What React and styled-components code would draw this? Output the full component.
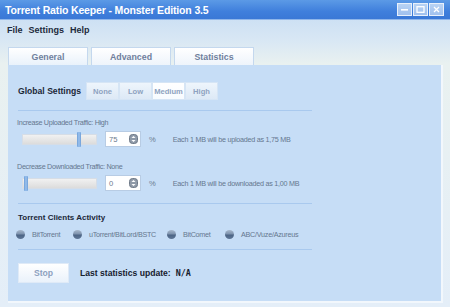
import React from "react";
import styled, { createGlobalStyle } from "styled-components";

const Global = createGlobalStyle`
  html, body { margin: 0; padding: 0; }
  body { font-family: "Liberation Sans", Arial, sans-serif; background: #fff; }
`;

const Window = styled.div`
  width: 450px;
  height: 307px;
  display: flex;
  flex-direction: column;
  background: linear-gradient(#c3daf3 0px, #d8e7f4 40px, #e9f1f0 64px, #e4eef8 100%);
  overflow: hidden;
`;

const TitleBar = styled.div`
  height: 19px;
  flex: none;
  display: flex;
  align-items: center;
  justify-content: space-between;
  padding: 0 6px 0 5px;
  background: linear-gradient(#5c9ae6, #3f7fdc 60%, #3a78d6);
  border-bottom: 1px solid #8fb6ea;
`;

const Title = styled.span`
  color: #fff;
  font-weight: bold;
  font-size: 10.5px;
  letter-spacing: -0.15px;
`;

const WinButtons = styled.div`
  display: flex;
  gap: 1px;
`;

const WinButton = styled.div`
  width: 15px;
  height: 13px;
  box-sizing: border-box;
  border: 1px solid #e8f0fb;
  background: linear-gradient(#b9d3f4, #9fc0ee);
  display: flex;
  align-items: center;
  justify-content: center;
`;

const MenuBar = styled.div`
  height: 17px;
  flex: none;
  display: flex;
  align-items: center;
  gap: 6px;
  padding: 0 7px;
  margin-top: 1px;
`;

const MenuItem = styled.span`
  font-size: 9px;
  font-weight: bold;
  color: #1d2a3c;
`;

const TabRow = styled.div`
  display: flex;
  gap: 3px;
  padding-left: 8px;
  margin-top: 9px;
  height: 18px;
  flex: none;
`;

const Tab = styled.div`
  width: 80px;
  box-sizing: border-box;
  display: flex;
  align-items: center;
  justify-content: center;
  font-size: 8.8px;
  font-weight: bold;
  color: #6f7f9c;
  border: 1px solid #c4d8ee;
  border-bottom: none;
  background: ${(p) =>
    p.$active
      ? "linear-gradient(#ffffff, #e9f2fb)"
      : "linear-gradient(#ffffff, #eef4fb)"};
`;

const Panel = styled.div`
  margin: 0 7px 0 8px;
  height: 238px;
  flex: none;
  box-sizing: border-box;
  background: #c6ddf6;
  border-right: 2px solid #f2f7fc;
  border-bottom: 2px solid #f2f7fc;
  padding: 17px 0 0 10px;
  display: flex;
  flex-direction: column;
`;

const Row = styled.div`
  display: flex;
  align-items: center;
`;

const Heading = styled.span`
  font-size: ${(p) => p.$size || 8.6}px;
  font-weight: bold;
  color: #1b2738;
  margin-top: ${(p) => p.$top || 0}px;
`;

const LevelGroup = styled.div`
  display: flex;
  margin-left: 5px;
`;

const LevelButton = styled.div`
  width: 33px;
  height: 18px;
  box-sizing: border-box;
  display: flex;
  align-items: center;
  justify-content: center;
  font-size: 7.6px;
  font-weight: bold;
  color: #8ea2c0;
  border: 1px solid #d6e5f5;
  background: ${(p) =>
    p.$active ? "linear-gradient(#ffffff, #f7fbff)" : "linear-gradient(#eef5fc, #dde9f6)"};
`;

const Separator = styled.div`
  width: 294px;
  height: 1px;
  background: #a9c9ee;
  margin-top: ${(p) => p.$top}px;
`;

const Label = styled.div`
  font-size: 7.2px;
  letter-spacing: -0.3px;
  color: #65778f;
  margin-top: ${(p) => p.$top}px;
  margin-left: -1px;
`;

const SliderRow = styled(Row)`
  margin-top: ${(p) => p.$top}px;
  height: 16px;
`;

const Track = styled.div`
  position: relative;
  width: 75px;
  height: 11px;
  margin-left: 4px;
  box-sizing: border-box;
  border: 1px solid #d6dde6;
  background: linear-gradient(#f1f1f1, #dcdcdc);
`;

const Thumb = styled.div`
  position: absolute;
  top: -3px;
  width: 4px;
  height: 15px;
  border-radius: 1px;
  background: linear-gradient(90deg, #6e9fd8, #9cc2ee, #6e9fd8);
`;

const Spin = styled.div`
  width: 36px;
  height: 16px;
  box-sizing: border-box;
  margin-left: 8px;
  background: #fff;
  border: 1px solid #b8cce4;
  display: flex;
  align-items: center;
  justify-content: space-between;
  padding: 0 2px 0 3px;
  font-size: 7.6px;
  color: #6b7a8e;
`;

const Percent = styled.span`
  font-size: 7.6px;
  color: #6b7a8e;
  margin-left: 8px;
`;

const Note = styled.span`
  font-size: 7.2px;
  letter-spacing: -0.25px;
  color: #65778f;
  margin-left: 17px;
`;

const Clients = styled(Row)`
  margin-top: 8px;
`;

const Client = styled.div`
  display: flex;
  align-items: center;
  width: ${(p) => p.$w}px;
  font-size: 7.2px;
  letter-spacing: -0.25px;
  color: #65778f;
  gap: 7px;
`;

const Dot = styled.span`
  width: 9px;
  height: 9px;
  border-radius: 50%;
  margin-left: -2px;
  background: linear-gradient(#a8b8cc 0%, #7d92ad 45%, #4c6484 55%, #5f7797 100%);
  flex: none;
`;

const Bottom = styled(Row)`
  margin-top: 13px;
`;

const StopButton = styled.div`
  width: 51px;
  height: 20px;
  box-sizing: border-box;
  display: flex;
  align-items: center;
  justify-content: center;
  font-size: 8.6px;
  font-weight: bold;
  color: #8da1bf;
  border: 1px solid #dfeaf7;
  background: linear-gradient(#ffffff, #eaf2fb);
`;

const Status = styled.span`
  font-size: 8.6px;
  font-weight: bold;
  color: #16202e;
  margin-left: 11px;
`;

const Mono = styled.span`
  font-family: "DejaVu Sans Mono", monospace;
  font-size: 8.4px;
  margin-left: 5px;
`;

const SpinIcon = () => (
  <svg width="9" height="10" viewBox="0 0 9 10">
    <rect x="0.5" y="0.5" width="8" height="9" rx="3" fill="#8f9aa8" stroke="#6f7a88" />
    <path d="M2.5 4 L4.5 2 L6.5 4 Z" fill="#fff" />
    <path d="M2.5 6 L4.5 8 L6.5 6 Z" fill="#fff" />
  </svg>
);

const Slider = ({ pos, value, note }) => (
  <>
    <Track>
      <Thumb style={{ left: pos }} />
    </Track>
    <Spin>
      {value}
      <SpinIcon />
    </Spin>
    <Percent>%</Percent>
    <Note>{note}</Note>
  </>
);

export default function App() {
  return (
    <>
      <Global />
      <Window>
        <TitleBar>
          <Title>Torrent Ratio Keeper - Monster Edition 3.5</Title>
          <WinButtons>
            <WinButton>
              <svg width="9" height="7" viewBox="0 0 9 7">
                <rect x="1" y="3" width="7" height="1.6" fill="#fff" />
              </svg>
            </WinButton>
            <WinButton>
              <svg width="9" height="7" viewBox="0 0 9 7">
                <rect x="1" y="0.7" width="7" height="5.6" fill="none" stroke="#fff" strokeWidth="1.3" />
              </svg>
            </WinButton>
            <WinButton>
              <svg width="9" height="7" viewBox="0 0 9 7">
                <path d="M2 1 L7 6 M7 1 L2 6" stroke="#fff" strokeWidth="1.3" />
              </svg>
            </WinButton>
          </WinButtons>
        </TitleBar>
        <MenuBar>
          <MenuItem>File</MenuItem>
          <MenuItem>Settings</MenuItem>
          <MenuItem>Help</MenuItem>
        </MenuBar>
        <TabRow>
          <Tab $active>General</Tab>
          <Tab>Advanced</Tab>
          <Tab>Statistics</Tab>
        </TabRow>
        <Panel>
          <Row>
            <Heading $size={8.6}>Global Settings</Heading>
            <LevelGroup>
              <LevelButton>None</LevelButton>
              <LevelButton>Low</LevelButton>
              <LevelButton $active>Medium</LevelButton>
              <LevelButton>High</LevelButton>
            </LevelGroup>
          </Row>
          <Separator $top={10} />
          <Label $top={7}>Increase Uploaded Traffic: High</Label>
          <SliderRow $top={4}>
            <Slider pos={54} value="75" note="Each 1 MB will be uploaded as 1,75 MB" />
          </SliderRow>
          <Label $top={15}>Decrease Downloaded Traffic: None</Label>
          <SliderRow $top={4}>
            <Slider pos={1} value="0" note="Each 1 MB will be downloaded as 1,00 MB" />
          </SliderRow>
          <Separator $top={12} />
          <Heading $size={8} $top={9}>Torrent Clients Activity</Heading>
          <Clients>
            <Client $w={57}><Dot />BitTorrent</Client>
            <Client $w={94}><Dot />uTorrent/BitLord/BSTC</Client>
            <Client $w={58}><Dot />BitComet</Client>
            <Client $w={90}><Dot />ABC/Vuze/Azureus</Client>
          </Clients>
          <Separator $top={10} />
          <Bottom>
            <StopButton>Stop</StopButton>
            <Status>
              Last statistics update:<Mono>N/A</Mono>
            </Status>
          </Bottom>
        </Panel>
      </Window>
    </>
  );
}
